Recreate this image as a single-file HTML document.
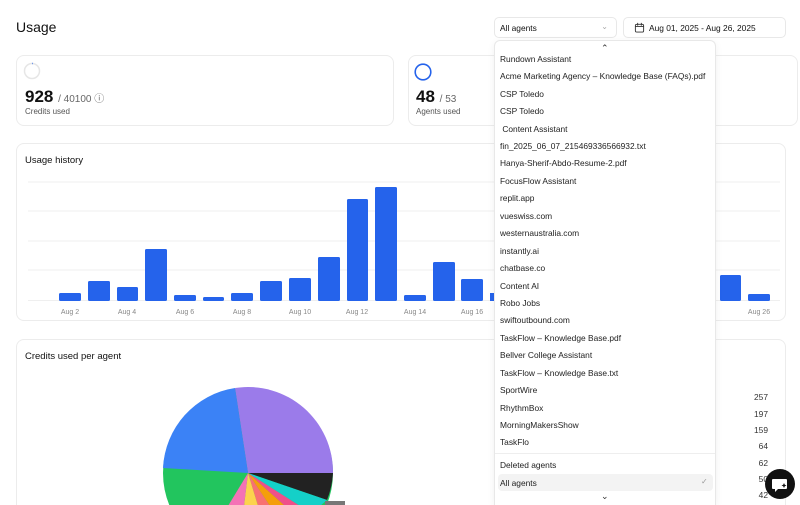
<!DOCTYPE html>
<html><head><meta charset="utf-8"><style>
*{box-sizing:border-box;margin:0;padding:0}
html,body{width:800px;height:505px;overflow:hidden}
body{background:#fff;font-family:"Liberation Sans",Arial,sans-serif;color:#111;position:relative}
.card{position:absolute;border:1px solid #ececec;border-radius:8px;background:#fff}
.abs{position:absolute}
.dd{position:absolute;left:494px;top:40px;width:222px;height:465px;background:#fff;border:1px solid #e8e8e8;border-bottom:none;border-radius:6px 6px 0 0;box-shadow:0 2px 8px rgba(0,0,0,.06)}
.it{position:absolute;left:5px;font-size:8.4px;color:#222;white-space:nowrap}
.num{position:absolute;right:32px;font-size:8.4px;color:#333}
</style></head><body>
<div class="abs" style="left:16px;top:19px;font-size:14px;font-weight:500">Usage</div>
<div class="abs" style="left:494px;top:17px;width:123px;height:21px;border:1px solid #e8e8e8;border-radius:5px;font-size:8.4px;padding:5px 0 0 5px">All agents<span style="position:absolute;right:8px;top:4px;color:#aaa;font-size:8px">⌄</span></div>
<div class="abs" style="left:623px;top:17px;width:163px;height:21px;border:1px solid #e8e8e8;border-radius:5px;font-size:8.4px;padding:5px 0 0 25px">Aug 01, 2025 - Aug 26, 2025
<svg style="position:absolute;left:10px;top:4px" width="11" height="11" viewBox="0 0 12 12" fill="none" stroke="#333" stroke-width="1"><rect x="1.5" y="2.5" width="9" height="8.5" rx="1.5"/><path d="M1.5 5h9M4 1v3M8 1v3"/></svg></div>

<div class="card" style="left:16px;top:55px;width:378px;height:71px"></div>
<svg class="abs" style="left:23px;top:62px" width="18" height="18"><circle cx="9" cy="9" r="7.5" fill="none" stroke="#e6e6e6" stroke-width="1.5"/><path d="M9 1.5a7.5 7.5 0 0 1 .6 0" stroke="#2563eb" stroke-width="1.5" fill="none"/></svg>
<div class="abs" style="left:25px;top:87px;font-size:17px;font-weight:700">928 <span style="font-size:10px;font-weight:400;color:#666">/ 40100 ⓘ</span></div>
<div class="abs" style="left:25px;top:107px;font-size:8px;color:#555">Credits used</div>
<div class="card" style="left:408px;top:55px;width:390px;height:71px"></div>
<svg class="abs" style="left:413px;top:62px" width="20" height="20"><circle cx="10" cy="10" r="7.8" fill="none" stroke="#2563eb" stroke-width="1.6"/></svg>
<div class="abs" style="left:416px;top:87px;font-size:17px;font-weight:700">48 <span style="font-size:10px;font-weight:400;color:#666">/ 53</span></div>
<div class="abs" style="left:416px;top:107px;font-size:8px;color:#555">Agents used</div>

<div class="card" style="left:16px;top:143px;width:770px;height:178px"></div>
<div class="abs" style="left:25px;top:155px;font-size:9.5px;font-weight:500">Usage history</div>
<svg class="abs" style="left:0;top:0" width="800" height="330">
<g stroke="#efefef" stroke-width="1"><line x1="28" y1="182" x2="780" y2="182"/><line x1="28" y1="211" x2="780" y2="211"/><line x1="28" y1="241" x2="780" y2="241"/><line x1="28" y1="270" x2="780" y2="270"/><line x1="28" y1="300.5" x2="780" y2="300.5"/></g>
<g fill="#2563eb">
<rect x="59" y="293" width="22" height="8" rx="1.5"/><rect x="88" y="281" width="22" height="20" rx="1.5"/><rect x="117" y="287" width="21" height="14" rx="1.5"/><rect x="145" y="249" width="22" height="52" rx="1.5"/><rect x="174" y="295" width="22" height="6" rx="1.5"/><rect x="203" y="297" width="21" height="4" rx="1.5"/><rect x="231" y="293" width="22" height="8" rx="1.5"/><rect x="260" y="281" width="22" height="20" rx="1.5"/><rect x="289" y="278" width="22" height="23" rx="1.5"/><rect x="318" y="257" width="22" height="44" rx="1.5"/><rect x="347" y="199" width="21" height="102" rx="1.5"/><rect x="375" y="187" width="22" height="114" rx="1.5"/><rect x="404" y="295" width="22" height="6" rx="1.5"/><rect x="433" y="262" width="22" height="39" rx="1.5"/><rect x="461" y="279" width="22" height="22" rx="1.5"/><rect x="490" y="293" width="5" height="8"/>
<rect x="720" y="275" width="21" height="26" rx="1.5"/><rect x="748" y="294" width="22" height="7" rx="1.5"/></g>
<g font-size="7" fill="#888" text-anchor="middle" font-family="Liberation Sans"><text x="70" y="314">Aug 2</text><text x="127" y="314">Aug 4</text><text x="185" y="314">Aug 6</text><text x="242" y="314">Aug 8</text><text x="300" y="314">Aug 10</text><text x="357" y="314">Aug 12</text><text x="415" y="314">Aug 14</text><text x="472" y="314">Aug 16</text><text x="759" y="314">Aug 26</text></g>
</svg>

<div class="card" style="left:16px;top:339px;width:770px;height:166px;border-bottom:none;border-radius:8px 8px 0 0"></div>
<div class="abs" style="left:25px;top:351px;font-size:9.5px;font-weight:500">Credits used per agent</div>
<svg class="abs" style="left:0;top:0" width="800" height="505">
<circle cx="248" cy="473" r="85" fill="#22c55e"/>
<path d="M248 473L235 388A85 85 0 0 1 333 473Z" fill="#9b7bea"/>
<path d="M248 473L163 468A85 85 0 0 1 235 388Z" fill="#3b82f6"/>
<path d="M248 473L333 473A85 85 0 0 1 327 500Z" fill="#222"/>
<path d="M248 473L327 500L320 506L300 506Z" fill="#14d0c8"/>
<path d="M248 473L300 506L285 506Z" fill="#f0508a"/>
<path d="M248 473L285 506L270 506Z" fill="#f59e0b"/>
<path d="M248 473L270 506L258 506Z" fill="#f87171"/>
<path d="M248 473L258 506L244 506Z" fill="#fcd34d"/>
<path d="M248 473L244 506L228 506Z" fill="#f472b6"/>
<rect x="325" y="501" width="20" height="4" fill="#777"/>
</svg>
<div class="num" style="top:392px">257</div><div class="num" style="top:409px">197</div><div class="num" style="top:425px">159</div><div class="num" style="top:441px">64</div><div class="num" style="top:458px">62</div><div class="num" style="top:474px">50</div><div class="num" style="top:490px">42</div>

<div class="dd">
<div class="abs" style="left:106px;top:2px;font-size:9px;color:#333">⌃</div>
<div class="it" style="top:13px">Rundown Assistant</div>
<div class="it" style="top:30px">Acme Marketing Agency – Knowledge Base (FAQs).pdf</div>
<div class="it" style="top:48px">CSP Toledo</div>
<div class="it" style="top:65px">CSP Toledo</div>
<div class="it" style="top:83px">&nbsp;Content Assistant</div>
<div class="it" style="top:100px">fin_2025_06_07_215469336566932.txt</div>
<div class="it" style="top:117px">Hanya-Sherif-Abdo-Resume-2.pdf</div>
<div class="it" style="top:135px">FocusFlow Assistant</div>
<div class="it" style="top:152px">replit.app</div>
<div class="it" style="top:170px">vueswiss.com</div>
<div class="it" style="top:187px">westernaustralia.com</div>
<div class="it" style="top:205px">instantly.ai</div>
<div class="it" style="top:222px">chatbase.co</div>
<div class="it" style="top:240px">Content AI</div>
<div class="it" style="top:257px">Robo Jobs</div>
<div class="it" style="top:274px">swiftoutbound.com</div>
<div class="it" style="top:292px">TaskFlow – Knowledge Base.pdf</div>
<div class="it" style="top:309px">Bellver College Assistant</div>
<div class="it" style="top:327px">TaskFlow – Knowledge Base.txt</div>
<div class="it" style="top:344px">SportWire</div>
<div class="it" style="top:362px">RhythmBox</div>
<div class="it" style="top:379px">MorningMakersShow</div>
<div class="it" style="top:396px">TaskFlo</div>
<div class="abs" style="left:0;top:412px;width:220px;border-top:1px solid #eee"></div>
<div class="it" style="top:419px">Deleted agents</div>
<div class="abs" style="left:3px;top:433px;width:215px;height:17px;background:#f3f3f3;border-radius:4px"></div>
<div class="it" style="top:437px">All agents</div>
<div class="abs" style="left:206px;top:436px;font-size:8px;color:#999">✓</div>
<div class="abs" style="left:106px;top:450px;font-size:9px;color:#333">⌄</div>
</div>

<div class="abs" style="left:765px;top:469px;width:30px;height:30px;border-radius:50%;background:#111">
<svg width="30" height="30" viewBox="0 0 30 30"><path d="M8 10h13a1 1 0 0 1 1 1v8a1 1 0 0 1-1 1h-8l-3 3v-3H8a1 1 0 0 1-1-1v-8a1 1 0 0 1 1-1z" fill="#fff"/><path d="M19 14l.8 1.7 1.7.8-1.7.8-.8 1.7-.8-1.7-1.7-.8 1.7-.8z" fill="#111"/></svg></div>
</body></html>
